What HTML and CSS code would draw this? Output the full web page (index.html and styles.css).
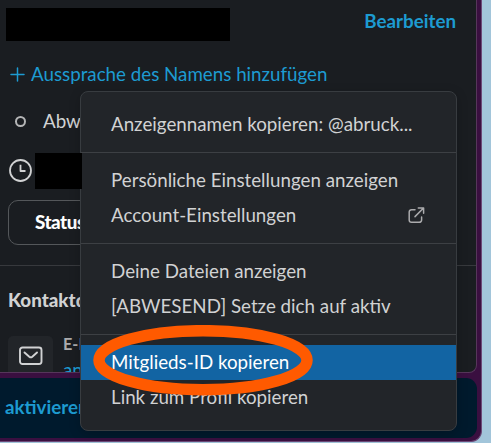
FILE: index.html
```html
<!DOCTYPE html>
<html lang="de">
<head>
<meta charset="utf-8">
<title>Profil</title>
<link rel="stylesheet" href="styles.css">
</head>
<body>
<div class="window">
  <section class="panel">
    <header class="head">
      <div class="redacted name"></div>
      <a class="edit">Bearbeiten</a>
    </header>
    <a class="pronounce">
      <svg width="16" height="16" viewBox="0 0 16 16"><path d="M7.5 1v13M1 7.5h13" fill="none" stroke="currentColor" stroke-width="1.5" stroke-linecap="round"/></svg>
      <span>Aussprache des Namens hinzufügen</span>
    </a>
    <div class="presence"><i class="dot"></i><span>Abw</span></div>
    <div class="time">
      <svg width="24" height="24" viewBox="0 0 24 24"><g fill="none" stroke="currentColor" stroke-width="1.8"><circle cx="12.5" cy="11.5" r="10.5"/><path d="M12.5 5.7v6.3h5" stroke-linejoin="round"/></g></svg>
      <div class="redacted clock"></div>
    </div>
    <button class="status">Status</button>
    <div class="contact">
      <h2>Kontaktd</h2>
      <div class="mail">
        <div class="mail-icon"><svg width="24" height="20" viewBox="0 0 24 20"><g fill="none" stroke="currentColor" stroke-width="1.9" stroke-linecap="round" stroke-linejoin="round"><rect x="1" y="1.5" width="21.5" height="16.5" rx="2.5"/><path d="M5.5 6.5l4.8 4.2q1.5 1.2 3 0L18 6.5"/></g></svg></div>
        <div class="mail-text"><b>E-M</b><a>an</a></div>
      </div>
    </div>
  </section>
  <footer class="banner"><a>aktivieren</a></footer>
</div>
<div class="menu">
  <div class="item"><span>Anzeigennamen kopieren: @abruck...</span></div>
  <hr>
  <div class="item"><span>Persönliche Einstellungen anzeigen</span></div>
  <div class="item"><span>Account-Einstellungen</span>
    <svg width="17" height="17" viewBox="0 0 17 17"><path d="M7 2.7H3.5A2.3 2.3 0 0 0 1.2 5v8a2.3 2.3 0 0 0 2.3 2.3h7.8a2.3 2.3 0 0 0 2.3-2.3V10M10.3 1h5.3v5.3M15.3 1.3L7 9.6" fill="none" stroke="currentColor" stroke-width="1.5" stroke-linecap="round" stroke-linejoin="round"/></svg>
  </div>
  <hr>
  <div class="item"><span>Deine Dateien anzeigen</span></div>
  <div class="item"><span>[ABWESEND] Setze dich auf aktiv</span></div>
  <hr>
  <div class="item active"><span>Mitglieds-ID kopieren</span></div>
  <div class="item"><span>Link zum Profil kopieren</span></div>
</div>
<svg class="marker" width="222" height="72" viewBox="0 0 222 72"><ellipse cx="110" cy="35.2" rx="104" ry="29.5" fill="none" stroke="#ff5a00" stroke-width="11.5"/></svg>
</body>
</html>
```
FILE: styles.css
```css
* { box-sizing: border-box; }
body {
  margin: 0;
  width: 491px;
  height: 443px;
  overflow: hidden;
  background: #a2c5da;
  font: 18.75px/35px Lato, sans-serif;
  color: #d1d2d3;
  white-space: nowrap;
}
.window {
  width: 482px;
  height: 442px;
  padding-right: 4px;
  background: #3a0f40;
  border-right: 1px solid #6c4a78;
  border-bottom: 1px solid #6c4a78;
  border-bottom-right-radius: 11px;
}
.panel {
  height: 373px;
  overflow: hidden;
  background: #1a1d21;
  border-right: 1px solid #56365b;
  border-bottom: 1px solid #56365b;
  border-bottom-right-radius: 8px;
}
.head {
  display: flex;
  justify-content: space-between;
  height: 41px;
  padding: 8px 20px 0 6px;
}
.redacted { background: #000; }
.name { width: 224px; height: 33px; }
.edit {
  color: #1d9bd1;
  font-weight: 700;
  line-height: 25px;
}
.pronounce {
  display: flex;
  align-items: center;
  gap: 5px;
  height: 35px;
  margin: 16px 0 0 10px;
  color: #1d9bd1;
}
.presence {
  display: flex;
  align-items: center;
  gap: 17px;
  height: 35px;
  margin: 12px 0 0 15px;
}
.pronounce span,
.presence span,
.item span { padding-bottom: 2px; }
.dot {
  width: 11px;
  height: 11px;
  border: 2px solid #b4b5b6;
  border-radius: 50%;
}
.time {
  display: flex;
  align-items: center;
  gap: 3px;
  height: 36px;
  margin: 14px 0 0 8px;
}
.clock {
  position: relative;
  z-index: 3;
  width: 47px;
  height: 36px;
}
.status {
  display: block;
  width: 180px;
  height: 45px;
  margin: 11px 0 0 8px;
  padding: 0 0 2px 26px;
  text-align: left;
  color: #fff;
  background: none;
  border: 1px solid #54575a;
  border-radius: 10px;
  font: 900 18.75px Lato, sans-serif;
  letter-spacing: -.45px;
}
.contact {
  margin-top: 20px;
  padding: 16px 0 0 8px;
  border-top: 1px solid #37393d;
}
h2 {
  margin: 0;
  font: 900 18.75px/36px Lato, sans-serif;
}
.mail { display: flex; gap: 10px; margin-top: 18px; }
.mail-icon {
  display: flex;
  align-items: center;
  justify-content: center;
  width: 45px;
  height: 45px;
  padding-bottom: 5px;
  background: #222529;
  border-radius: 5px;
}
.mail-text {
  display: flex;
  flex-direction: column;
  line-height: 26px;
  margin-top: -5px;
}
.mail-text b { font-size: 16.25px; color: #ababad; }
.mail-text a { color: #1d9bd1; }
.banner {
  height: 60px;
  margin-top: 5px;
  padding: 11px 0 0 5px;
  background: #001a2d;
  border-radius: 0 11px 11px 0;
  color: #1d9bd1;
  font-weight: 700;
}
.menu {
  position: absolute;
  left: 80px;
  top: 91px;
  width: 377px;
  height: 340px;
  padding-top: 15px;
  background: #222529;
  border: 1px solid #383c40;
  border-radius: 8px;
  box-shadow: 0 3px 12px rgba(0, 0, 0, .2);
}
.item {
  display: flex;
  align-items: center;
  justify-content: space-between;
  height: 35px;
  padding: 0 31px 0 30px;
}
.item svg { color: #ababad; }
.active { background: #1264a3; color: #fff; }
hr {
  height: 1px;
  margin: 10px 0;
  border: 0;
  background: #3d4044;
}
.marker { position: absolute; left: 93px; top: 325px; }
```
